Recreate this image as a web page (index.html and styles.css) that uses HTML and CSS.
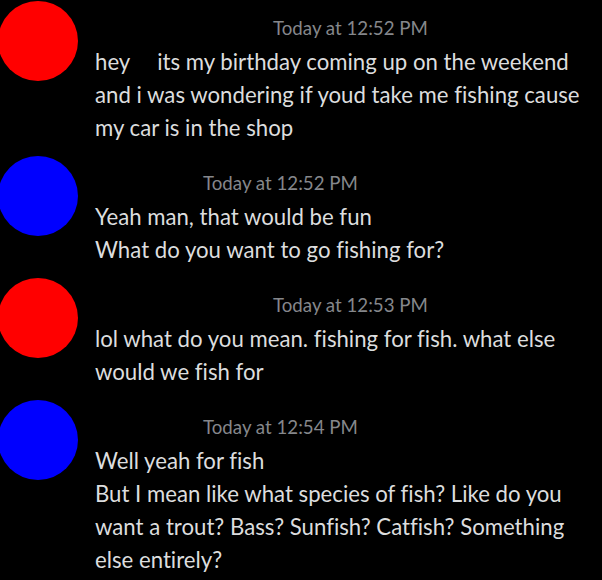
FILE: index.html
```html
<!DOCTYPE html>
<html>
<head>
<meta charset="utf-8">
<link rel="stylesheet" href="styles.css">
</head>
<body>
<div class="chat">
  <div class="msg">
    <div class="avatar red"></div>
    <div class="content">
      <div class="meta"><span class="author author-a"></span><span class="time">Today at 12:52 PM</span></div>
      <div class="line">hey<span class="emoji-gap"></span>its my birthday coming up on the weekend</div>
      <div class="line">and i was wondering if youd take me fishing cause</div>
      <div class="line">my car is in the shop</div>
    </div>
  </div>
  <div class="msg">
    <div class="avatar blue"></div>
    <div class="content">
      <div class="meta"><span class="author author-b"></span><span class="time">Today at 12:52 PM</span></div>
      <div class="line">Yeah man, that would be fun</div>
      <div class="line">What do you want to go fishing for?</div>
    </div>
  </div>
  <div class="msg">
    <div class="avatar red"></div>
    <div class="content">
      <div class="meta"><span class="author author-a"></span><span class="time">Today at 12:53 PM</span></div>
      <div class="line">lol what do you mean. fishing for fish. what else</div>
      <div class="line">would we fish for</div>
    </div>
  </div>
  <div class="msg">
    <div class="avatar blue"></div>
    <div class="content">
      <div class="meta"><span class="author author-b"></span><span class="time">Today at 12:54 PM</span></div>
      <div class="line">Well yeah for fish</div>
      <div class="line">But I mean like what species of fish? Like do you</div>
      <div class="line">want a trout? Bass? Sunfish? Catfish? Something</div>
      <div class="line">else entirely?</div>
    </div>
  </div>
</div>
</body>
</html>
```

FILE: styles.css
```css
html, body {
  margin: 0;
  padding: 0;
  background: #000;
}
body {
  padding-top: 0;
  font-family: Lato, "Open Sans", sans-serif;
  font-variant-ligatures: none;
  color: #dcddde;
  overflow: hidden;
}
.chat {
  display: flex;
  flex-direction: column;
  gap: 11px;
}
.msg {
  display: flex;
  align-items: flex-start;
}
.avatar {
  width: 80px;
  height: 80px;
  border-radius: 50%;
  margin-left: -2px;
  margin-top: 1px;
  flex: none;
}
.red { background: #ff0000; }
.blue { background: #0000ff; }
.content {
  margin-left: 17px;
  padding-top: 12px;
}
.meta {
  height: 33px;
  line-height: 33px;
  display: flex;
  align-items: center;
}
.author {
  display: inline-block;
}
.author-a { width: 178px; }
.author-b { width: 108px; }
.time {
  font-size: 18.7px;
  color: #85878b;
}
.line {
  font-size: 22.2px;
  line-height: 33px;
  white-space: nowrap;
}
.emoji-gap {
  display: inline-block;
  width: 27px;
}
```
